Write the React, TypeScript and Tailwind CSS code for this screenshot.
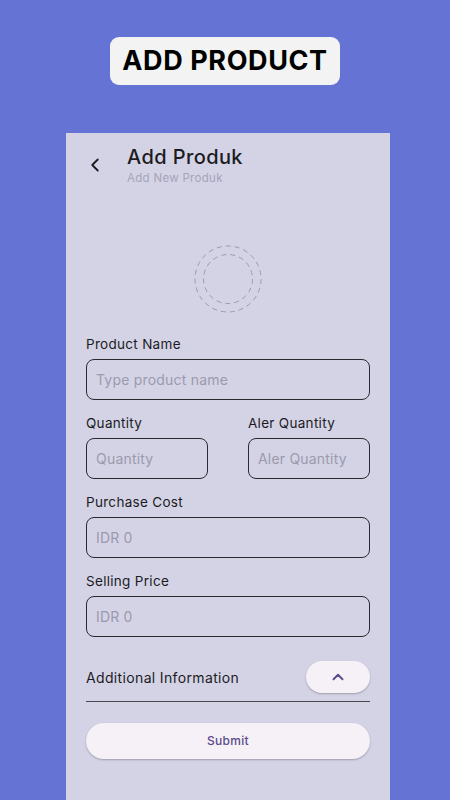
import { ChevronLeft, ChevronUp } from "lucide-react";

const font = { fontFamily: "Inter, 'Noto Sans', sans-serif" };

function Field({ label, placeholder }: { label: string; placeholder: string }) {
  return (
    <div className="flex flex-col">
      <label className="text-[13.5px] leading-[20px] tracking-[0.3px] text-[#1c1b1f]">{label}</label>
      <div className="mt-[5px] h-[41px] rounded-[8px] border border-[#2a2930] flex items-center px-[9px]">
        <span className="text-[14px] tracking-[0.2px] text-[#9b9aac]">{placeholder}</span>
      </div>
    </div>
  );
}

export default function App() {
  return (
    <div className="w-[450px] h-[800px] bg-[#6574d4] flex flex-col overflow-hidden" style={font}>
      {/* Title pill */}
      <div className="self-center mt-[37px] h-[48px] px-[12px] rounded-[9px] bg-[#f2f3f2] flex items-center">
        <span className="text-[27px] font-bold tracking-[0.6px] text-black">ADD PRODUCT</span>
      </div>

      {/* Phone panel */}
      <div className="ml-[66px] mt-[48px] w-[324px] flex-1 bg-[#d4d3e6] px-[20px]">
        {/* Header */}
        <div className="flex items-start pt-[13px]">
          <ChevronLeft className="w-[22px] h-[22px] mt-[8px] ml-[-2px] text-[#1c1b1f]" strokeWidth={2} />
          <div className="ml-[21px] flex flex-col">
            <span className="text-[20px] leading-[22px] font-medium tracking-[0.4px] text-[#1c1b1f]">Add Produk</span>
            <span className="text-[11.5px] leading-[14px] tracking-[0.3px] text-[#a5a4b8] mt-[3px]">Add New Produk</span>
          </div>
        </div>

        {/* Image placeholder */}
        <div className="flex justify-center mt-[60px]">
          <svg width="68" height="68" viewBox="0 0 68 68">
            <circle cx="34" cy="34" r="33" fill="none" stroke="#9c9bab" strokeWidth="1" strokeDasharray="5 4" />
            <circle cx="34" cy="34" r="24.5" fill="none" stroke="#9c9bab" strokeWidth="1" strokeDasharray="5 4" />
          </svg>
        </div>

        {/* Form */}
        <div className="mt-[21px] flex flex-col gap-[13px]">
          <Field label="Product Name" placeholder="Type product name" />
          <div className="grid grid-cols-[122px_122px] justify-between">
            <Field label="Quantity" placeholder="Quantity" />
            <Field label="Aler Quantity" placeholder="Aler Quantity" />
          </div>
          <Field label="Purchase Cost" placeholder="IDR 0" />
          <Field label="Selling Price" placeholder="IDR 0" />
        </div>

        {/* Additional information */}
        <div className="mt-[24px] flex items-center justify-between border-b border-[#4a4950] pb-[8px]">
          <span className="text-[14px] tracking-[0.35px] text-[#1c1b1f]">Additional Information</span>
          <button className="w-[64px] h-[32px] rounded-full bg-[#f6f1f7] shadow-[0_1px_2px_rgba(0,0,0,0.25)] flex items-center justify-center">
            <ChevronUp className="w-[18px] h-[18px] text-[#5a4a8c]" strokeWidth={2.5} />
          </button>
        </div>

        {/* Submit */}
        <button className="mt-[21px] w-full h-[36px] rounded-full bg-[#f6f1f7] shadow-[0_1px_2px_rgba(0,0,0,0.25)] flex items-center justify-center">
          <span className="text-[12px] font-medium tracking-[0.3px] text-[#5a4a8c]">Submit</span>
        </button>
      </div>
    </div>
  );
}
